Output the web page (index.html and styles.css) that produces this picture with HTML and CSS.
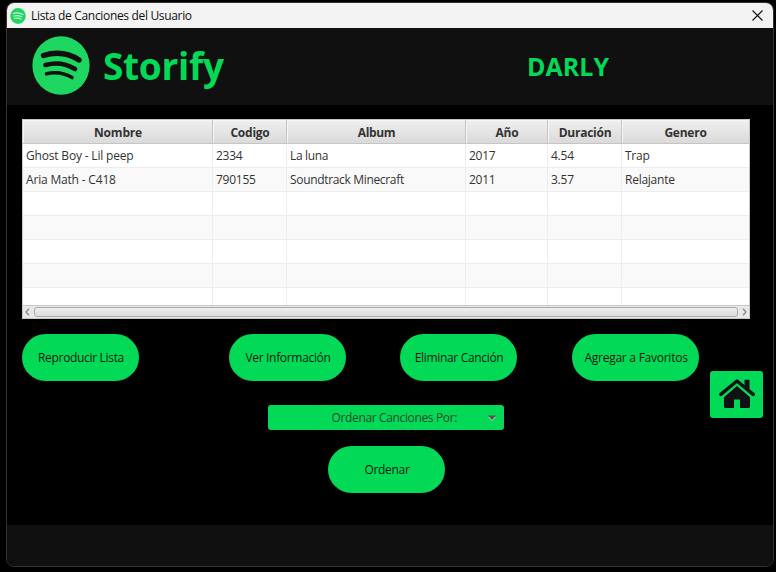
FILE: index.html
```html
<!DOCTYPE html>
<html lang="es">
<head>
<meta charset="utf-8">
<title>Lista de Canciones del Usuario</title>
<link rel="stylesheet" href="styles.css">
</head>
<body>
<svg width="0" height="0" class="defs" aria-hidden="true">
  <symbol id="logo" viewBox="0 0 58 59">
    <ellipse cx="29" cy="29.5" rx="28.6" ry="29.2" fill="#1ed760"/>
    <g fill="none" stroke="#101010" stroke-linecap="round">
      <path d="M11.500 19.500Q31 13.500 47 24" stroke-width="5.400"/>
      <path d="M13.500 29Q29 24.500 43 33" stroke-width="4.600"/>
      <path d="M14.500 37.800Q28 34.500 40 41.500" stroke-width="3.600"/>
    </g>
  </symbol>
  <symbol id="logo-light" viewBox="0 0 58 59">
    <ellipse cx="29" cy="29.5" rx="28.6" ry="29.2" fill="#1ed760"/>
    <g fill="none" stroke="#c9f5d8" stroke-linecap="round">
      <path d="M12 20Q31 14 47 24" stroke-width="5"/>
      <path d="M14 29.500Q29 25 43 33" stroke-width="4.500"/>
      <path d="M15 38.500Q28 35 40 41.500" stroke-width="4"/>
    </g>
  </symbol>
</svg>
<div class="window">
  <div class="titlebar">
    <svg class="title-icon"><use href="#logo-light"/></svg>
    <span class="title-text">Lista de Canciones del Usuario</span>
    <svg class="close" viewBox="0 0 11 11"><path d="M.5.5 10.500 10.500M10.500.5.5 10.500" stroke="#111" stroke-width="1.100"/></svg>
  </div>
  <header class="header">
    <svg class="logo"><use href="#logo"/></svg>
    <span class="brand">Storify</span>
    <span class="user">DARLY</span>
  </header>
  <main class="main">
    <div class="table">
      <div class="row head"><span>Nombre</span><span>Codigo</span><span>Album</span><span>Año</span><span>Duración</span><span>Genero</span></div>
      <div class="row"><span>Ghost Boy - Lil peep</span><span>2334</span><span>La luna</span><span>2017</span><span>4.54</span><span>Trap</span></div>
      <div class="row alt"><span>Aria Math - C418</span><span>790155</span><span>Soundtrack Minecraft</span><span>2011</span><span>3.57</span><span>Relajante</span></div>
      <div class="row"><span></span><span></span><span></span><span></span><span></span><span></span></div>
      <div class="row alt"><span></span><span></span><span></span><span></span><span></span><span></span></div>
      <div class="row"><span></span><span></span><span></span><span></span><span></span><span></span></div>
      <div class="row alt"><span></span><span></span><span></span><span></span><span></span><span></span></div>
      <div class="row last"><span></span><span></span><span></span><span></span><span></span><span></span></div>
      <div class="scrollbar">
        <svg class="arrow" viewBox="0 0 5 8"><path d="M4 .8 1 4l3 3.200"/></svg>
        <div class="thumb"></div>
        <svg class="arrow" viewBox="0 0 5 8"><path d="M1 .8 4 4 1 7.200"/></svg>
      </div>
    </div>
    <div class="actions">
      <button class="pill play">Reproducir Lista</button>
      <button class="pill info">Ver Información</button>
      <button class="pill remove">Eliminar Canción</button>
      <button class="pill fav">Agregar a Favoritos</button>
    </div>
    <div class="combo"><span>Ordenar Canciones Por:</span>
      <svg class="caret" viewBox="0 0 8 6"><path d="M0 2h8L4 6z" fill="#9fd0ac"/><path d="M0 .5h8L4 5z" fill="#54545a"/></svg>
    </div>
    <button class="pill sort">Ordenar</button>
    <button class="home" aria-label="Inicio">
      <svg viewBox="0 0 36 30"><path d="M5 18.200 18 7l13 11.200V27.500Q31 29 29.500 29H21v-8.500h-6V29H6.500Q5 29 5 27.500z" fill="#111"/><path d="M2 16 18 2.300 34 16" fill="none" stroke="#02d957" stroke-width="5.800"/><path d="M25.500.7h5v12l-5-4.500z" fill="#111"/><path d="M1.800 15.400 18 2 34.200 15.400" fill="none" stroke="#111" stroke-width="3.400" stroke-linecap="round" stroke-linejoin="round"/></svg>
    </button>
  </main>
  <footer class="footer"></footer>
</div>
</body>
</html>
```
FILE: styles.css
```css
* { box-sizing: border-box; }
body { margin: 0; height: 572px; padding: 2px 2px 5px 6px; overflow: hidden; background: #000; color: #333; font: 12px/16px "Open Sans", "Noto Sans", sans-serif; }
.defs { position: absolute; }
.window { width: 768px; height: 565px; border: 1px solid #333; border-radius: 8px; overflow: hidden; display: flex; flex-direction: column; background: #000; }
.titlebar { height: 25px; flex: none; background: #f3f3f3; display: flex; align-items: center; padding: 0 10px 0 3px; color: #111; }
.title-icon { width: 16px; height: 16px; margin-right: 5px; }
.title-text { flex: 1; letter-spacing: -0.33px; }
.close { width: 11px; height: 11px; }
.header { height: 77px; flex: none; background: #101010; display: flex; align-items: center; padding: 0 0 2px 25px; color: #02d957; font-weight: 700; }
.logo { width: 58px; height: 59px; margin-bottom: 1px; }
.brand { width: 424px; margin-left: 13px; font-size: 37px; line-height: 50px; letter-spacing: -0.3px; }
.user { font-size: 25px; line-height: 34px; }
.main { position: relative; height: 420px; flex: none; padding: 14px 23px 0 15px; }
.table { width: 728px; height: 200px; border: 1px solid #c8c8c8; background: #fff; }
.row { display: grid; grid-template-columns: 190px 74px 179px 82px 74px 127px; height: 24px; background: #fff; }
.row span { border-right: 1px solid #ededed; border-bottom: 1px solid #ededed; padding: 4px 0 0 3px; white-space: nowrap; overflow: hidden; letter-spacing: -0.25px; }
.row span:first-child { letter-spacing: -0.18px; }
.row span:nth-child(3) { letter-spacing: -0.33px; }
.alt { background: #f9f9f9; }
.head { background: linear-gradient(#efefef, #d9d9d9); font-weight: 700; text-align: center; }
.head span { border-color: #c5c5c5; box-shadow: inset 1px 1px #f5f5f5; padding: 5px 0 0 1px; }
.row span:last-child { border-right-color: transparent; }
.last { height: 17px; }
.last span { border-bottom: 0; }
.scrollbar { height: 13px; border-top: 1px solid #c8c8c8; background: #e8e8e8; display: flex; align-items: center; gap: 4px; padding: 0 2px; }
.arrow { width: 5px; height: 8px; fill: none; stroke: #888; stroke-width: 1.3; }
.thumb { flex: 1; height: 10px; border: 1px solid #aaa; border-radius: 3px; background: linear-gradient(#eee, #dcdcdc); }
.pill { height: 47px; width: 117px; border: 0; border-radius: 24px; padding: 0 0 0 1px; background: #02d957; color: #081c0e; font: inherit; letter-spacing: -0.32px; white-space: nowrap; }
.actions { display: flex; margin-top: 15px; }
.info { margin-left: 90px; }
.remove { margin-left: 54px; }
.fav { width: 127px; margin-left: 55px; letter-spacing: -0.25px; }
.combo { width: 236px; height: 25px; margin: 24px 0 0 246px; border-radius: 3px; background: #02d957; display: flex; align-items: center; justify-content: flex-end; padding-right: 8px; color: #1c4a2a; letter-spacing: -0.36px; }
.caret { width: 8px; height: 6px; margin-left: 31px; }
.sort { display: block; margin: 16px 0 0 306px; }
.home { position: absolute; left: 703px; top: 266px; width: 53px; height: 47px; border: 0; border-radius: 3px; background: #02d957; padding: 8px 8px 9px 9px; }
.home svg { display: block; width: 36px; height: 30px; }
.footer { flex: 1; background: #101010; }
```
